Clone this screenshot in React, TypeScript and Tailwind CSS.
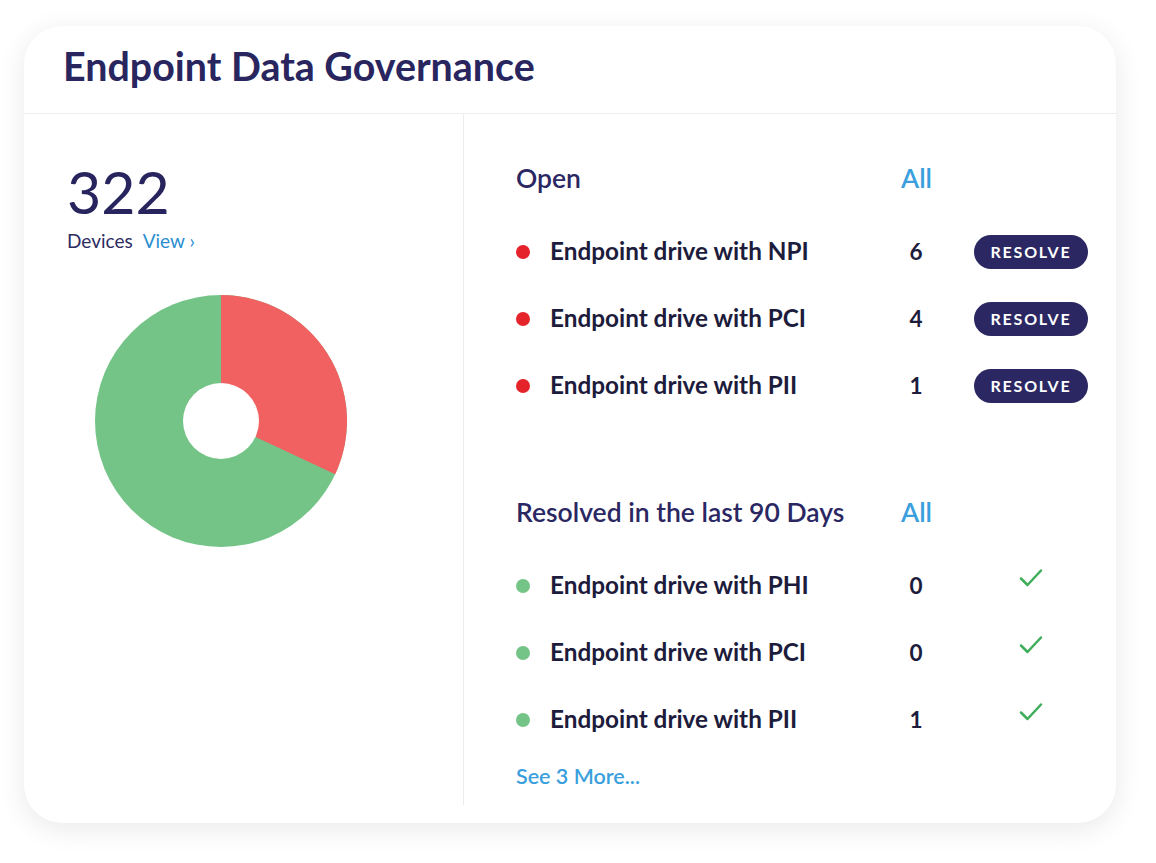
import React from "react";

const font = { fontFamily: "Lato, 'Noto Sans', sans-serif" };

function Pie() {
  return (
    <svg width="252" height="252" viewBox="0 0 252 252">
      <circle cx="126" cy="126" r="126" fill="#74c487" />
      <path d="M126,126 L126,0 A126,126 0 0 1 240.2,179.2 Z" fill="#f26162" />
      <circle cx="126" cy="126" r="38" fill="#ffffff" />
    </svg>
  );
}

function Check() {
  return (
    <svg width="24" height="20" viewBox="0 0 24 20" fill="none">
      <path d="M2 10.5 L8.5 17 L22 2.5" stroke="#3fae5b" strokeWidth="2.5" strokeLinecap="round" strokeLinejoin="round" />
    </svg>
  );
}

type Row = { name: string; count: number };

const openRows: Row[] = [
  { name: "Endpoint drive with NPI", count: 6 },
  { name: "Endpoint drive with PCI", count: 4 },
  { name: "Endpoint drive with PII", count: 1 },
];
const resolvedRows: Row[] = [
  { name: "Endpoint drive with PHI", count: 0 },
  { name: "Endpoint drive with PCI", count: 0 },
  { name: "Endpoint drive with PII", count: 1 },
];

function SectionHeader({ title }: { title: string }) {
  return (
    <div className="flex h-[38px] items-center pt-[2px]">
      <div className="w-[385px] text-[26.5px] font-semibold text-[#2a2762]">{title}</div>
      <div className="text-[26.5px] font-semibold text-[#3a9fdc]">All</div>
    </div>
  );
}

function ItemRow({ row, open }: { row: Row; open: boolean }) {
  return (
    <div className="flex h-[67px] items-center pt-[2px]">
      <div className="flex w-[385px] items-center">
        <span className={`h-[14px] w-[14px] rounded-full ${open ? "bg-[#e5232a]" : "bg-[#74c487]"}`} />
        <span className="ml-[20px] text-[24.3px] font-bold text-[#1d1c3c]">{row.name}</span>
      </div>
      <div className="w-[30px] text-center text-[22.5px] font-bold text-[#1d1c3c]">{row.count}</div>
      <div className="ml-[43px] flex w-[114px] justify-center">
        {open ? (
          <button className="h-[34px] w-[114px] rounded-full bg-[#2b2762] text-[16px] font-bold tracking-[1.8px] text-white">
            RESOLVE
          </button>
        ) : (
          <div className="-mt-[16px]">
            <Check />
          </div>
        )}
      </div>
    </div>
  );
}

export default function App() {
  return (
    <div className="min-h-[863px] w-[1156px] bg-white pl-[24px] pt-[26px]" style={font}>
      <div className="flex h-[797px] w-[1092px] flex-col rounded-[38px] bg-white shadow-[0_6px_28px_rgba(0,0,0,0.09)]">
        <div className="flex h-[88px] items-center border-b border-[#eeeeee] pb-[8px] pl-[39px]">
          <h1 className="text-[39.4px] font-bold text-[#29265f]">Endpoint Data Governance</h1>
        </div>
        <div className="flex flex-1 pb-[18px]">
          <div className="w-[440px] border-r border-[#ececec]">
            <div className="pl-[43px] pt-[45px]">
              <div className="text-[59px] leading-[66px] text-[#27245e]">322</div>
              <div className="mt-[2px] flex items-baseline text-[19px]">
                <span className="text-[#2e2b63]">Devices</span>
                <span className="ml-[10px] text-[#2a8fd0]">View ›</span>
              </div>
            </div>
            <div className="ml-[71px] mt-[39px]">
              <Pie />
            </div>
          </div>
          <div className="flex-1 pl-[52px] pt-[45px]">
            <SectionHeader title="Open" />
            <div className="mt-[20px]">
              {openRows.map((r, i) => (
                <ItemRow key={i} row={r} open />
              ))}
            </div>
            <div className="mt-[75px]">
              <SectionHeader title="Resolved in the last 90 Days" />
            </div>
            <div className="mt-[20px]">
              {resolvedRows.map((r, i) => (
                <ItemRow key={i} row={r} open={false} />
              ))}
            </div>
            <div className="mt-[12px] flex h-[24px] items-center text-[21.5px] font-semibold text-[#3a9fdc]">See 3 More...</div>
          </div>
        </div>
      </div>
    </div>
  );
}
